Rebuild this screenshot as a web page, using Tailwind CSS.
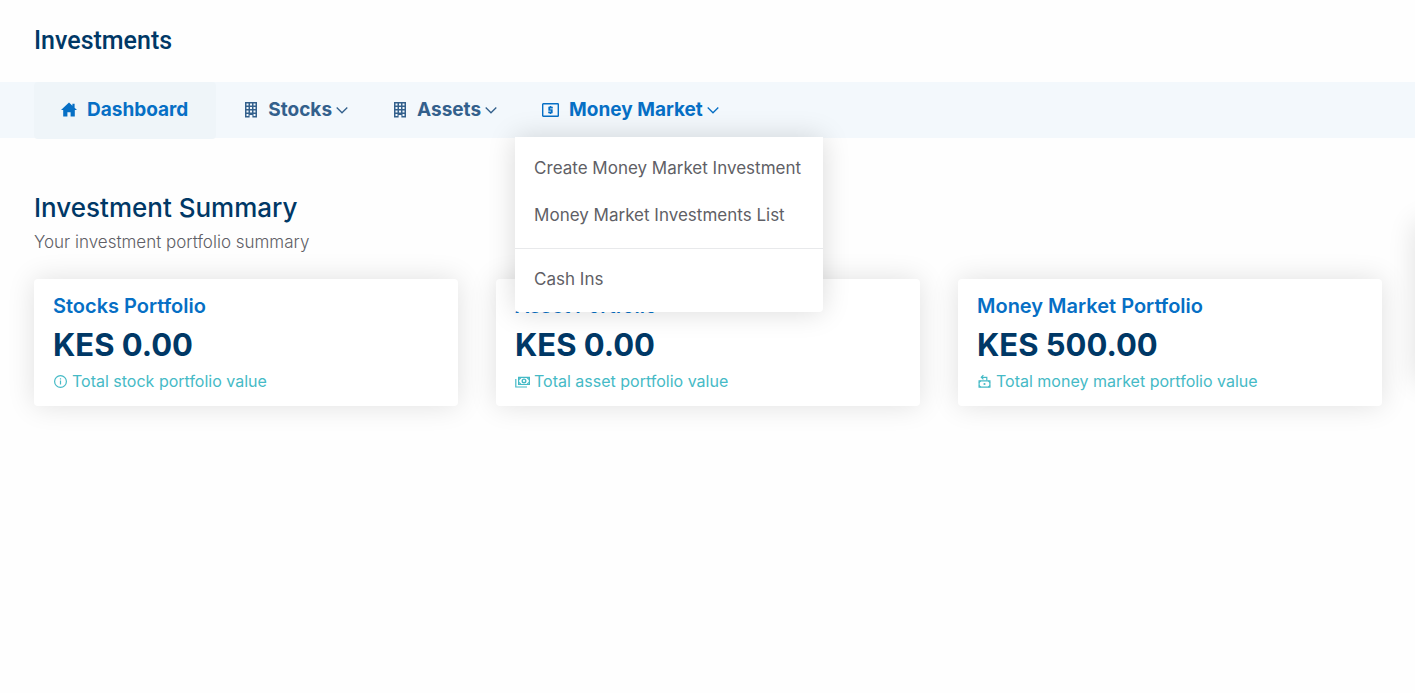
<!DOCTYPE html>
<html lang="en">
<head>
  <meta charset="UTF-8">
  <meta name="viewport" content="width=device-width, initial-scale=1.0">
  <title>Investments</title>
  <script src="https://cdn.jsdelivr.net/npm/@tailwindcss/browser@4"></script>
</head>
<body class="bg-[#fefefe] font-['Inter','Open_Sans',sans-serif] text-[#003866] min-h-screen overflow-x-hidden">
  <!-- Page Header -->
  <header class="h-[82px] px-[34px] flex items-center">
    <h1 class="font-['Roboto',sans-serif] text-[25px] font-medium">Investments</h1>
  </header>

  <!-- Navigation -->
  <nav class="bg-[#f3f8fc] h-14 px-[34px] text-[19px] leading-[26px] font-bold">
    <ul class="flex">
      <li>
        <a href="#" class="flex items-center h-[57px] pb-[2px] pl-[27px] pr-[28px] rounded bg-[#eff5f9] text-[#066fc5]">
          <svg class="w-4 h-4 mr-[10px]" viewBox="0 0 16 16" fill="currentColor"><path d="M8 .6 0 8h2.200v6.600h4.200v-4.400h3.200v4.400h4.200V8H16l-2.400-2.200V1.800h-2.200v2z"/></svg>
          Dashboard
        </a>
      </li>
      <li>
        <button type="button" class="flex items-center h-14 pb-px pl-[28px] pr-[18px] text-[#33608c]">
          <svg class="w-[14px] h-4 mr-[10px]" viewBox="0 0 14 16" fill="currentColor" fill-rule="evenodd"><path d="M1 0h12v15.600H8.400V13H5.600v2.600H1zM2.500 1.500v2h2v-2zM6 1.500v2h2v-2zM9.500 1.500v2h2v-2zM2.500 5v2h2V5zM6 5v2h2V5zM9.500 5v2h2V5zM2.500 8.500v2h2v-2zM6 8.500v2h2v-2zM9.500 8.500v2h2v-2zM2.500 12v2h2v-2zM9.500 12v2h2v-2z"/></svg>
          Stocks
          <svg class="w-3 h-4 ml-1" viewBox="0 0 12 16" fill="none" stroke="currentColor" stroke-width="1.300"><path d="M.7 5.500 6 10.800l5.300-5.300"/></svg>
        </button>
      </li>
      <li>
        <button type="button" class="flex items-center h-14 pb-px pl-[27px] pr-[18px] text-[#33608c]">
          <svg class="w-[14px] h-4 mr-[10px]" viewBox="0 0 14 16" fill="currentColor" fill-rule="evenodd"><path d="M1 0h12v15.600H8.400V13H5.600v2.600H1zM2.500 1.500v2h2v-2zM6 1.500v2h2v-2zM9.500 1.500v2h2v-2zM2.500 5v2h2V5zM6 5v2h2V5zM9.500 5v2h2V5zM2.500 8.500v2h2v-2zM6 8.500v2h2v-2zM9.500 8.500v2h2v-2zM2.500 12v2h2v-2zM9.500 12v2h2v-2z"/></svg>
          Assets
          <svg class="w-3 h-4 ml-1" viewBox="0 0 12 16" fill="none" stroke="currentColor" stroke-width="1.300"><path d="M.7 5.500 6 10.800l5.300-5.300"/></svg>
        </button>
      </li>
      <li class="relative">
        <button type="button" class="flex items-center h-14 pb-px pl-[27px] pr-[18px] text-[#066fc5]">
          <svg class="w-[17px] h-4 mr-[10px]" viewBox="0 0 17 16" fill="none" stroke="currentColor"><rect x=".7" y="1.700" width="15.600" height="12.600" rx=".6" stroke-width="1.400"/><path d="M10.800 5.600H7.200v2.400h2.600v2.400H6.200M8.500 4v1.600M8.500 10.400V12" stroke-width="1.700"/></svg>
          Money Market
          <svg class="w-3 h-4 ml-1" viewBox="0 0 12 16" fill="none" stroke="currentColor" stroke-width="1.300"><path d="M.7 5.500 6 10.800l5.300-5.300"/></svg>
        </button>
        <!-- Money Market Dropdown -->
        <div class="absolute left-0 top-[55px] z-10 w-[308px] pt-[7px] pb-[10px] bg-white rounded-b shadow-[0_0_28px_rgba(0,0,0,0.15)] text-[17px] font-normal text-[#5f5f66]">
          <a href="#" class="flex items-center h-[47px] px-[19px] whitespace-nowrap">Create Money Market Investment</a>
          <a href="#" class="flex items-center h-[47px] px-[19px] whitespace-nowrap">Money Market Investments List</a>
          <hr class="mt-[10px] mb-[6px] border-[#e8e9eb]">
          <a href="#" class="flex items-center h-[47px] px-[19px] whitespace-nowrap">Cash Ins</a>
        </div>
      </li>
    </ul>
  </nav>

  <!-- Investment Summary -->
  <main class="pl-[34px] pr-[33px] pt-[52px]">
    <h2 class="text-[26px] leading-9 font-medium">Investment Summary</h2>
    <p class="text-[17px] leading-8 font-light text-[#5f5f66]">Your investment portfolio summary</p>

    <div class="grid grid-cols-3 gap-[38px] mt-[21px]">
      <div class="bg-white rounded px-[19px] py-3 shadow-[0_0_28px_rgba(0,0,0,0.12)]">
        <h3 class="text-xl leading-[30px] font-semibold text-[#066fc5]">Stocks Portfolio</h3>
        <p class="text-[31px] leading-[48px] font-bold">KES 0.00</p>
        <p class="flex items-center gap-1 text-base leading-[25px] text-[#45bac6]">
          <svg class="w-[15px] h-[15px]" viewBox="0 0 15 15" fill="none" stroke="currentColor"><circle cx="7.500" cy="7.500" r="5.900" stroke-width="1.200"/><path d="M7.500 6.600v4M7.500 4.300v1.200" stroke-width="1.200"/></svg>
          Total stock portfolio value
        </p>
      </div>
      <div class="bg-white rounded px-[19px] py-3 shadow-[0_0_28px_rgba(0,0,0,0.12)]">
        <h3 class="text-xl leading-[30px] font-semibold text-[#066fc5]">Asset Portfolio</h3>
        <p class="text-[31px] leading-[48px] font-bold">KES 0.00</p>
        <p class="flex items-center gap-1 text-base leading-[25px] text-[#45bac6]">
          <svg class="w-[15px] h-[15px]" viewBox="0 0 15 15" fill="none" stroke="currentColor" stroke-width="1.200"><path d="M3.600 3.300h10.800v7.200H3.600z"/><circle cx="9" cy="6.900" r="1.800" stroke-width="1.400"/><path d="M.8 5v8H12"/><path d="M4 5.500 6 3.500M14 5.500l-2-2M4 8.300l2 2M14 8.300l-2 2"/></svg>
          Total asset portfolio value
        </p>
      </div>
      <div class="bg-white rounded px-[19px] py-3 shadow-[0_0_28px_rgba(0,0,0,0.12)]">
        <h3 class="text-xl leading-[30px] font-semibold text-[#066fc5]">Money Market Portfolio</h3>
        <p class="text-[31px] leading-[48px] font-bold">KES 500.00</p>
        <p class="flex items-center gap-1 text-base leading-[25px] text-[#45bac6]">
          <svg class="w-[15px] h-[15px]" viewBox="0 0 15 15" fill="none" stroke="currentColor" stroke-width="1.200"><path d="M2.100 6.900h10.800v6.300H2.100z"/><path d="M9.800 6.500V3.300H4.500M6.400 1.200 4.300 3.300l2.100 2.100"/><circle cx="7.500" cy="10" r="1.100" fill="currentColor" stroke="none"/><path d="M2 8.600l1.700-1.700M13 8.600l-1.700-1.700M2 11.500l1.700 1.700M13 11.500l-1.700 1.700"/></svg>
          Total money market portfolio value
        </p>
      </div>
    </div>
  </main>

  <!-- Collapsed side panel -->
  <aside class="fixed left-full top-[222px] w-10 h-[160px] bg-white rounded shadow-[0_0_28px_rgba(0,0,0,0.12)]"></aside>
</body>
</html>
